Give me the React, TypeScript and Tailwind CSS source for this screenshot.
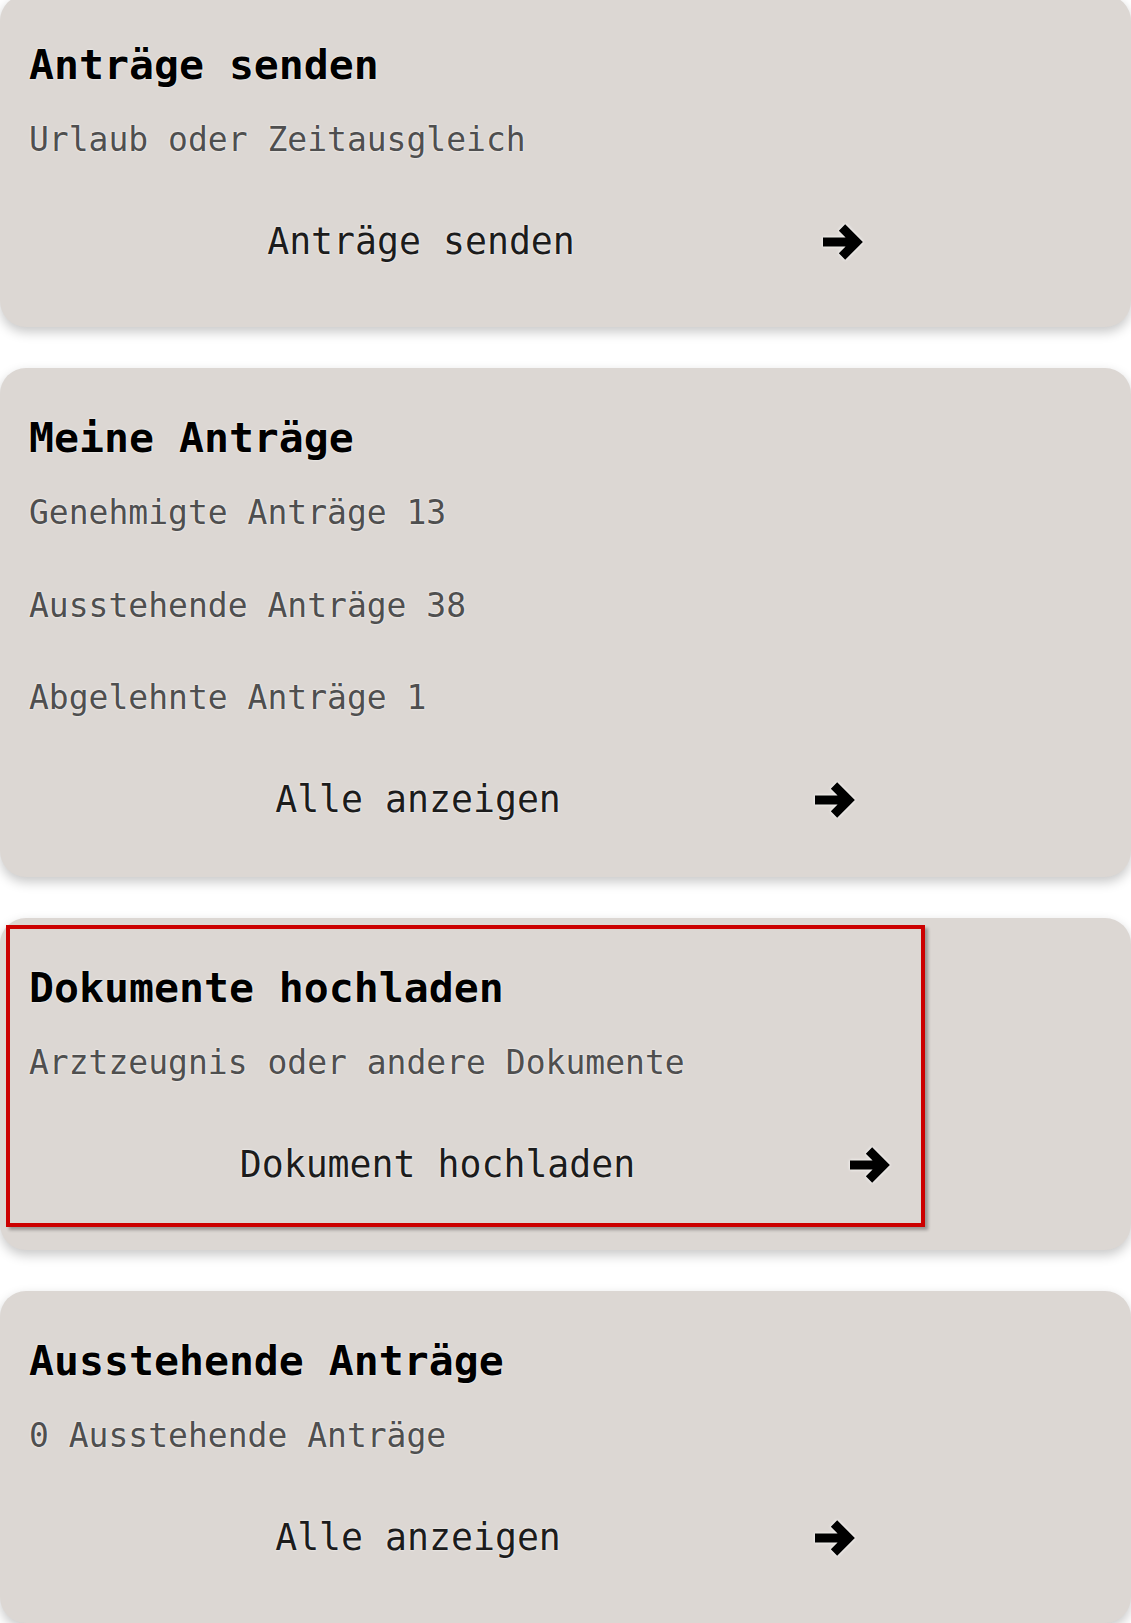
const mono = "font-['DejaVu_Sans_Mono','Liberation_Mono',monospace]";
const halo = "[text-shadow:0_0_2px_#f3f1ef,0_0_2px_#f3f1ef]";

const Arrow = () => (
  <svg
    width="41"
    height="40"
    viewBox="0 0 41 40"
    className="shrink-0 [filter:drop-shadow(0_0_1.5px_#f1efed)_drop-shadow(0_0_1px_#f1efed)]"
  >
    <path
      d="M0 20H33M19 5.5L33.5 20L19 34.5"
      fill="none"
      stroke="#000"
      strokeWidth="9"
      strokeLinejoin="miter"
      strokeLinecap="butt"
    />
  </svg>
);

type CardProps = {
  title: string;
  lines: string[];
  action: string;
  gap: string;
  highlight?: boolean;
  className?: string;
};

const Card = ({ title, lines, action, gap, highlight, className }: CardProps) => {
  return (
    <div
      className={`relative w-full rounded-[26px] bg-[#dcd7d3] px-[29px] pt-[45px] shadow-[0_5px_12px_rgba(0,0,0,0.22)] ${className || "pb-[62px]"}`}
    >
      {/* Header */}
      <h2 className={`text-[41.5px] leading-[50px] font-bold text-black ${halo}`}>
        {title}
      </h2>
      {/* Info lines */}
      {lines.map((line, i) => (
        <p
          key={line}
          className={`text-[33px] leading-[40px] text-[#4f4f4f] ${halo} ${
            i === 0 ? "mt-[30px]" : "mt-[52.5px]"
          }`}
        >
          {line}
        </p>
      ))}
      {/* Action */}
      <div className={`mt-[60px] flex h-[44px] items-center justify-center ${gap}`}>
        <span className={`text-[36.5px] leading-[44px] text-[#1c1c1c] ${halo}`}>
          {action}
        </span>
        <Arrow />
      </div>
      {highlight && (
        <div className="pointer-events-none absolute left-[6px] top-[7px] h-[302px] w-[919px] border-[4px] border-[#cc0000] shadow-[3px_3px_3px_rgba(0,0,0,0.3)]" />
      )}
    </div>
  );
};

export default function App() {
  return (
    <div className={`min-h-screen overflow-hidden bg-white ${mono}`}>
      <div className="-mt-[5px] flex flex-col gap-[41px]">
        <Card
          title="Anträge senden"
          lines={["Urlaub oder Zeitausgleich"]}
          action="Anträge senden"
          gap="gap-[248px]"
          className="pb-[63px]"
        />
        <Card
          title="Meine Anträge"
          lines={[
            "Genehmigte Anträge 13",
            "Ausstehende Anträge 38",
            "Abgelehnte Anträge 1",
          ]}
          action="Alle anzeigen"
          gap="gap-[254px]"
          className="pb-[55px]"
        />
        <Card
          title="Dokumente hochladen"
          lines={["Arztzeugnis oder andere Dokumente"]}
          action="Dokument hochladen"
          gap="gap-[215px]"
          highlight
          className="pb-[63px]"
        />
        <Card
          title="Ausstehende Anträge"
          lines={["0 Ausstehende Anträge"]}
          action="Alle anzeigen"
          gap="gap-[254px]"
          className="pb-[63px]"
        />
      </div>
    </div>
  );
}
